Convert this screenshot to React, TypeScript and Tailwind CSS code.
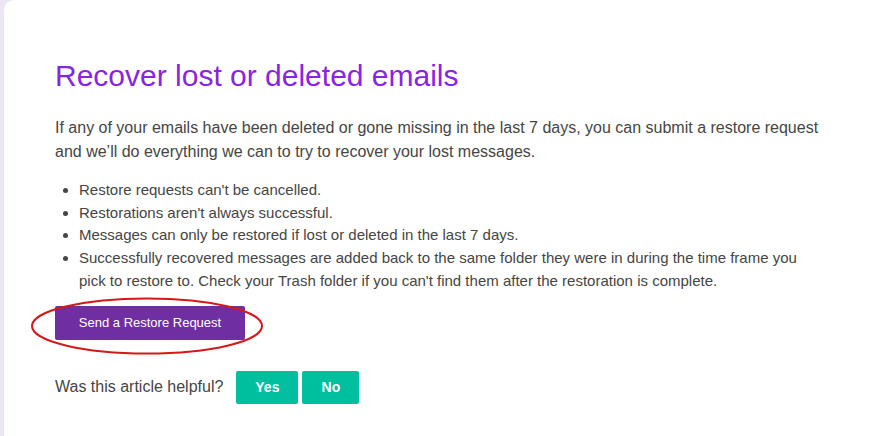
const bullets = [
  "Restore requests can't be cancelled.",
  "Restorations aren't always successful.",
  "Messages can only be restored if lost or deleted in the last 7 days.",
  "Successfully recovered messages are added back to the same folder they were in during the time frame you pick to restore to. Check your Trash folder if you can't find them after the restoration is complete.",
];

const App: React.FC = () => {
  return (
    <div className="w-[870px] h-[436px] bg-[#ece6f4] pl-[4px] overflow-hidden font-['Liberation_Sans',Arial,sans-serif]">
      <div className="h-full bg-white rounded-tl-[10px] pl-[51px] pt-[58px]">
        <h1 className="text-[30px] leading-[36px] text-[#8a24e4]">
          Recover lost or deleted emails
        </h1>
        <p className="mt-[22px] w-[790px] text-[16px] leading-[24px] text-[#454545]">
          If any of your emails have been deleted or gone missing in the last 7 days, you can submit a restore request
          and we’ll do everything we can to try to recover your lost messages.
        </p>
        <ul className="mt-[15px] w-[760px] pl-[24px] list-disc text-[15px] leading-[22.7px] text-[#454545]">
          {bullets.map((b) => (
            <li key={b}>{b}</li>
          ))}
        </ul>
        <div className="relative mt-[13px] w-fit">
          <button className="block w-[190px] h-[34px] bg-[#6f2fa3] rounded-[2px] text-white text-[13px]">
            Send a Restore Request
          </button>
          <svg
            className="absolute left-[-25px] top-[-10px] pointer-events-none"
            width="236"
            height="60"
            viewBox="0 0 236 60"
          >
            <ellipse cx="117" cy="30" rx="115" ry="27.5" fill="none" stroke="#d51818" strokeWidth="2" />
          </svg>
        </div>
        <div className="mt-[31px] flex items-center">
          <span className="text-[16px] text-[#454545] mr-[13px]">Was this article helpful?</span>
          <button className="w-[62px] h-[33px] bg-[#00bf9f] rounded-[2px] text-white text-[14px] font-bold">
            Yes
          </button>
          <button className="ml-[4px] w-[57px] h-[33px] bg-[#00bf9f] rounded-[2px] text-white text-[14px] font-bold">
            No
          </button>
        </div>
      </div>
    </div>
  );
};

export default App;
